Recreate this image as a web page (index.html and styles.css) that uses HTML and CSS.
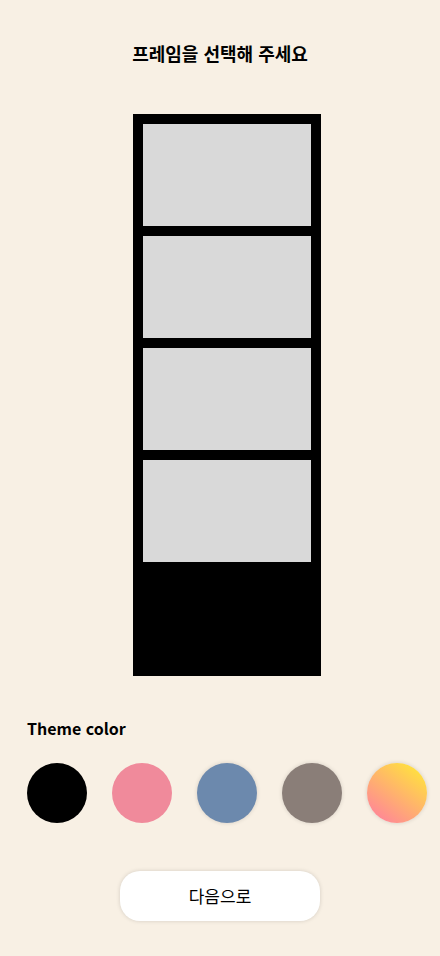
FILE: index.html
```html
<!DOCTYPE html>
<html lang="ko">
<head>
<meta charset="utf-8">
<meta name="viewport" content="width=device-width, initial-scale=1">
<title>프레임 선택</title>
<link rel="stylesheet" href="styles.css">
</head>
<body>
<main class="page">
  <h1 class="title">프레임을 선택해 주세요</h1>
  <div class="content">
    <div class="frame">
      <div class="shot"></div>
      <div class="shot"></div>
      <div class="shot"></div>
      <div class="shot"></div>
    </div>
    <section class="theme">
      <h2 class="theme-title">Theme color</h2>
      <div class="swatches">
        <button type="button" class="swatch black" aria-label="Black"></button>
        <button type="button" class="swatch pink" aria-label="Pink"></button>
        <button type="button" class="swatch blue raised" aria-label="Blue"></button>
        <button type="button" class="swatch taupe raised" aria-label="Taupe"></button>
        <button type="button" class="swatch sunset raised" aria-label="Sunset"></button>
      </div>
    </section>
  </div>
  <button type="button" class="next">다음으로</button>
</main>
</body>
</html>
```
FILE: styles.css
```css
* {
  box-sizing: border-box;
}

body {
  margin: 0;
  background: #f8f0e4;
  color: #000;
  font-family: "Noto Sans CJK KR", sans-serif;
}

.page {
  display: flex;
  flex-direction: column;
  align-items: center;
  min-height: 100vh;
  padding: 40px 0 32px;
}

.title {
  margin: 0 0 48px;
  font-size: 18px;
  font-weight: 700;
  line-height: 26px;
}

.content {
  display: flex;
  flex-direction: column;
  align-items: center;
  width: 100%;
  padding: 0 13px 0 27px;
}

.frame {
  display: flex;
  flex-direction: column;
  gap: 10px;
  padding: 10px 10px 114px;
  background: #000;
}

.shot {
  width: 168px;
  height: 102px;
  background: #d9d9d9;
}

.theme {
  width: 100%;
  margin-top: 39px;
}

.theme-title {
  margin: 0 0 22px;
  font-size: 16px;
  font-weight: 700;
  line-height: 26px;
}

.swatches {
  display: flex;
  justify-content: space-between;
}

.swatch {
  width: 60px;
  height: 60px;
  padding: 0;
  border: 0;
  border-radius: 50%;
}

.raised {
  box-shadow: 0 0 4px rgba(0, 0, 0, 0.15);
}

.black {
  background: #000;
}

.pink {
  background: #f08a9b;
}

.blue {
  background: #6c89ad;
}

.taupe {
  background: #8a7e78;
}

.sunset {
  background: linear-gradient(37deg, #ff8a94 14%, #ffe040 88%);
}

.next {
  width: 200px;
  height: 50px;
  margin-top: 48px;
  padding: 0;
  border: 0;
  border-radius: 20px;
  background: #fff;
  box-shadow: 0 0 4px rgba(0, 0, 0, 0.15);
  color: #000;
  font-family: inherit;
  font-size: 17px;
  font-weight: 400;
  line-height: 26px;
}
```
